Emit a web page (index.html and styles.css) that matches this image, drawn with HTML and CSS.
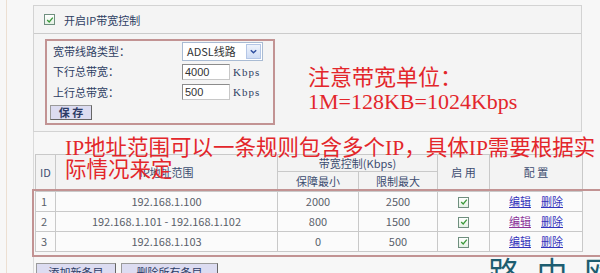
FILE: index.html
```html
<!DOCTYPE html>
<html lang="zh-CN">
<head>
    <meta charset="UTF-8">
    <title>IP带宽控制</title>
    <link rel="stylesheet" href="styles.css">
</head>
<body>
    <div class="page">
        <div class="frame">
            <section class="panel">
                <div class="panel-head">
                    <span class="check"><svg viewBox="0 0 10 10" width="8" height="8"><path d="M1.5 5 L4 7.5 L8.5 2" fill="none" stroke="#3c9a3c" stroke-width="1.6"/></svg></span>
                    <span>开启IP带宽控制</span>
                </div>
                <div class="panel-body">
                    <div class="line-box">
                        <div class="form-row row-a">
                            <label>宽带线路类型：</label>
                            <span class="select">ADSL线路<span class="arrow"><svg viewBox="0 0 10 10" width="9" height="9"><path d="M2 3.5 L5 6.5 L8 3.5" fill="none" stroke="#2f4f9f" stroke-width="1.6"/></svg></span></span>
                        </div>
                        <div class="form-row row-b">
                            <label>下行总带宽：</label>
                            <span class="input">4000</span>
                            <span class="unit">Kbps</span>
                        </div>
                        <div class="form-row row-c">
                            <label>上行总带宽：</label>
                            <span class="input">500</span>
                            <span class="unit">Kbps</span>
                        </div>
                        <button class="btn save">保 存</button>
                    </div>
                </div>
            </section>

            <section class="list">
                <table class="grid head">
                    <colgroup>
                        <col class="c-id"><col class="c-ip"><col class="c-min"><col class="c-max"><col class="c-on"><col class="c-cfg">
                    </colgroup>
                    <tr class="h1">
                        <th rowspan="2">ID</th>
                        <th rowspan="2">IP地址范围</th>
                        <th colspan="2">带宽控制(Kbps)</th>
                        <th rowspan="2">启 用</th>
                        <th rowspan="2">配 置</th>
                    </tr>
                    <tr class="h2">
                        <th>保障最小</th>
                        <th>限制最大</th>
                    </tr>
                </table>
                <div class="rows-box">
                    <table class="grid body">
                        <colgroup>
                            <col class="c-id"><col class="c-ip"><col class="c-min"><col class="c-max"><col class="c-on"><col class="c-cfg">
                        </colgroup>
                        <tr>
                            <td class="id">1</td>
                            <td>192.168.1.100</td>
                            <td>2000</td>
                            <td>2500</td>
                            <td><span class="check"><svg viewBox="0 0 10 10" width="8" height="8"><path d="M1.5 5 L4 7.5 L8.5 2" fill="none" stroke="#3c9a3c" stroke-width="1.6"/></svg></span></td>
                            <td><a class="link">编辑</a><a class="link">删除</a></td>
                        </tr>
                        <tr>
                            <td class="id">2</td>
                            <td>192.168.1.101 - 192.168.1.102</td>
                            <td>800</td>
                            <td>1500</td>
                            <td><span class="check"><svg viewBox="0 0 10 10" width="8" height="8"><path d="M1.5 5 L4 7.5 L8.5 2" fill="none" stroke="#3c9a3c" stroke-width="1.6"/></svg></span></td>
                            <td><a class="link visited">编辑</a><a class="link">删除</a></td>
                        </tr>
                        <tr>
                            <td class="id">3</td>
                            <td>192.168.1.103</td>
                            <td>0</td>
                            <td>500</td>
                            <td><span class="check"><svg viewBox="0 0 10 10" width="8" height="8"><path d="M1.5 5 L4 7.5 L8.5 2" fill="none" stroke="#3c9a3c" stroke-width="1.6"/></svg></span></td>
                            <td><a class="link">编辑</a><a class="link">删除</a></td>
                        </tr>
                    </table>
                </div>
                <div class="actions">
                    <button class="btn add">添加新条目</button>
                    <button class="btn remove">删除所有条目</button>
                </div>
            </section>
        </div>

        <!-- 红色批注 -->
        <div class="note note-unit">注意带宽单位：<br>1M=128KB=1024Kbps</div>
        <div class="note note-ip">IP地址范围可以一条规则包含多个IP，具体IP需要根据实<br>际情况来定</div>
        <div class="brand">路由网</div>
    </div>
</body>
</html>
```

FILE: styles.css
```css
:root {
    --text-color: #2f4063;
    --grid-line: #c9c9c9;
    --mark-color: #e3262b;
    --box-color: #c29393;
}

* {
    box-sizing: border-box;
    margin: 0;
    padding: 0;
}

body {
    font-family: "Noto Sans CJK SC", "Liberation Sans", sans-serif;
    font-size: 11px;
    color: var(--text-color);
    background-color: #f7f7f7;
}

.page {
    position: relative;
    width: 600px;
    height: 273px;
    overflow: hidden;
}

.frame {
    height: 273px;
    margin-left: 6px;
    padding: 5px 0 0 26px;
    border-left: 1px solid #ecdfd2;
}

/* 上面的设置面板 */
.panel {
    width: 549px;
    border: 1px solid #d3d3d3;
    background-color: #f4f4f4;
}

.panel-head {
    display: flex;
    align-items: center;
    gap: 9px;
    height: 28px;
    padding-left: 10px;
    border-bottom: 1px solid #cbcbcb;
}

.check {
    display: inline-flex;
    align-items: center;
    justify-content: center;
    width: 11px;
    height: 11px;
    border: 1px solid #6f8f7f;
    background: linear-gradient(#ffffff, #e4f0e4);
    vertical-align: middle;
}

.panel-body {
    padding: 5px 0 6px 11px;
}

.line-box {
    width: 230px;
    height: 86px;
    border: 2px solid var(--box-color);
    padding: 0 0 3px 6px;
}

.form-row {
    display: flex;
    align-items: center;
}

.row-a { height: 20px; }
.row-b { height: 21px; }
.row-c { height: 20px; }

.form-row label {
    width: 129px;
    line-height: 1;
}

.select {
    display: flex;
    align-items: center;
    justify-content: space-between;
    width: 81px;
    height: 19px;
    padding: 0 1px 0 4px;
    border: 1px solid #a9bbd3;
    background-color: #ffffff;
    color: #333333;
}

.arrow {
    display: flex;
    align-items: center;
    justify-content: center;
    width: 15px;
    height: 15px;
    border: 1px solid #b4c6e6;
    background: linear-gradient(#eef3fc, #cfdcf4);
}

.input {
    width: 48px;
    height: 16px;
    padding-left: 2px;
    border: 1px solid #8c8c8c;
    border-right-color: #c8c8c8;
    border-bottom-color: #c8c8c8;
    background-color: #ffffff;
    font-family: "Liberation Sans", sans-serif;
    font-size: 11px;
    line-height: 14px;
    color: #333333;
}

.unit {
    margin-left: 3px;
    font-family: "Liberation Serif", serif;
    letter-spacing: 1px;
}

.btn {
    height: 15px;
    border: 1px solid #666666;
    border-top-color: #9a9a9a;
    border-left-color: #9a9a9a;
    background-color: #dcdcf1;
    font-family: "Noto Sans CJK SC", sans-serif;
    font-size: 11px;
    line-height: 13px;
    color: #2c3b66;
}

.save {
    width: 42px;
    margin: 3px 0 0 -3px;
    font-weight: bold;
}

/* 规则列表 */
.list {
    padding: 22px 0 0 1px;
    border-left: 1px solid #dadada;
}

.grid {
    width: 547px;
    table-layout: fixed;
    border-collapse: collapse;
}

.c-id { width: 20px; }
.c-ip { width: 222px; }
.c-min { width: 81px; }
.c-max { width: 79px; }
.c-on { width: 52px; }
.c-cfg { width: 93px; }

.grid th,
.grid td {
    border: 1px solid var(--grid-line);
    text-align: center;
    font-weight: normal;
    line-height: 1;
    overflow: hidden;
    white-space: nowrap;
}

.head th {
    background-color: #f3f3f3;
    color: #3c4c70;
}

.head .h1 { height: 17px; }
.head .h2 { height: 19px; }

.rows-box {
    margin: -2px -3px 0;
    padding: 0 1px 3px;
    border: 2px solid var(--box-color);
}

.body tr { height: 20px; }

.body td {
    background-color: #fbfbfb;
    color: #5a5f6a;
}

.body td.id {
    text-align: left;
    padding-left: 5px;
}

.link {
    color: #3333bb;
    text-decoration: underline;
    margin: 0 5px;
}

.link.visited {
    color: #8a3399;
}

.actions {
    display: flex;
    gap: 5px;
    margin: 6px 0 0 1px;
}

.add {
    width: 80px;
    height: 18px;
}

.remove {
    width: 97px;
    height: 18px;
}

/* 批注文字 */
.note {
    position: absolute;
    font-family: "Liberation Serif", "Noto Sans CJK SC", serif;
    font-size: 22px;
    line-height: 22px;
    color: var(--mark-color);
    white-space: nowrap;
}

.note-unit {
    left: 308px;
    top: 66px;
    line-height: 24px;
}

.note-ip {
    left: 65px;
    top: 137px;
    font-size: 21.5px;
}

.brand {
    position: absolute;
    left: 488px;
    top: 255px;
    font-size: 32px;
    line-height: 1;
    letter-spacing: 16px;
    color: #1d5d70;
    white-space: nowrap;
}
```
